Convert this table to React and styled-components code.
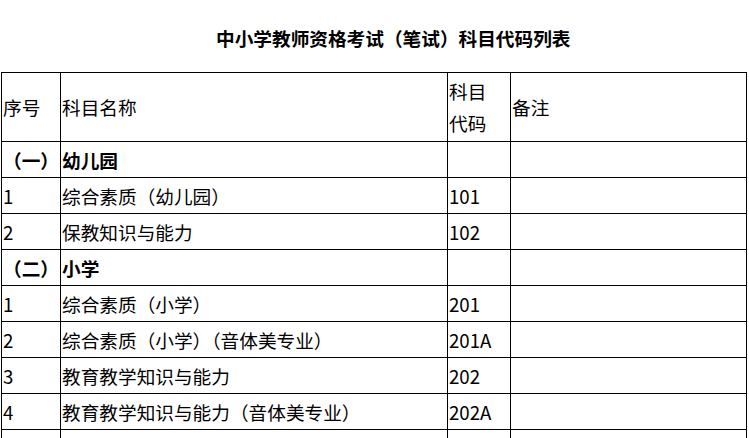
import styled, { createGlobalStyle } from "styled-components";

const GlobalStyle = createGlobalStyle`
  html, body {
    margin: 0;
    padding: 0;
    background: #ffffff;
  }
  body {
    font-family: "Noto Sans CJK SC", "Noto Sans", sans-serif;
    color: #000000;
  }
`;

const Page = styled.div`
  width: 749px;
  height: 438px;
  overflow: hidden;
  background: #ffffff;
`;

const Title = styled.h1`
  margin: 0;
  padding: 22px 0 0 216px;
  height: 32px;
  font-size: 18.67px;
  line-height: 32px;
  font-weight: 700;
  white-space: nowrap;
`;

const Table = styled.table`
  margin: 18px 0 0 1px;
  border-collapse: collapse;
  table-layout: fixed;
  width: 745px;
  font-size: 18.67px;
  line-height: 32px;
`;

const Row = styled.tr`
  height: ${(p) => (p.$tall ? "69px" : "36px")};
`;

const Cell = styled.td`
  border: 1px solid #000000;
  padding: 0 ${(p) => (p.$wrap ? "12px" : "0")} 0 1px;
  vertical-align: middle;
  text-align: left;
  font-weight: ${(p) => (p.$bold ? 700 : 400)};
  white-space: ${(p) => (p.$wrap ? "normal" : "nowrap")};
  overflow: hidden;
`;

// full-width brackets drawn centred in their em box, like the reference font
const Punct = styled.span`
  font-family: "Noto Sans CJK TC", "Noto Sans CJK SC", sans-serif;
`;

const withPunct = (text) =>
  text.split(/([（）])/).map((part, i) =>
    part === "（" || part === "）" ? <Punct key={i}>{part}</Punct> : part
  );

const sections = [
  {
    no: "（一）",
    name: "幼儿园",
    items: [
      ["1", "综合素质（幼儿园）", "101"],
      ["2", "保教知识与能力", "102"],
    ],
  },
  {
    no: "（二）",
    name: "小学",
    items: [
      ["1", "综合素质（小学）", "201"],
      ["2", "综合素质（小学）（音体美专业）", "201A"],
      ["3", "教育教学知识与能力", "202"],
      ["4", "教育教学知识与能力（音体美专业）", "202A"],
    ],
  },
];

export default function App() {
  return (
    <>
      <GlobalStyle />
      <Page>
        <Title>{withPunct("中小学教师资格考试（笔试）科目代码列表")}</Title>
        <Table>
          <colgroup>
            <col style={{ width: 59 }} />
            <col style={{ width: 387 }} />
            <col style={{ width: 63 }} />
            <col style={{ width: 236 }} />
          </colgroup>
          <tbody>
            <Row $tall>
              <Cell>序号</Cell>
              <Cell>科目名称</Cell>
              <Cell $wrap>科目代码</Cell>
              <Cell>备注</Cell>
            </Row>
            {sections.map((s) => [
              <Row key={s.no}>
                <Cell $bold>{withPunct(s.no)}</Cell>
                <Cell $bold>{s.name}</Cell>
                <Cell />
                <Cell />
              </Row>,
              ...s.items.map(([n, name, code]) => (
                <Row key={s.no + n}>
                  <Cell>{n}</Cell>
                  <Cell>{withPunct(name)}</Cell>
                  <Cell>{code}</Cell>
                  <Cell />
                </Row>
              )),
            ])}
            <Row>
              <Cell />
              <Cell />
              <Cell />
              <Cell />
            </Row>
          </tbody>
        </Table>
      </Page>
    </>
  );
}
